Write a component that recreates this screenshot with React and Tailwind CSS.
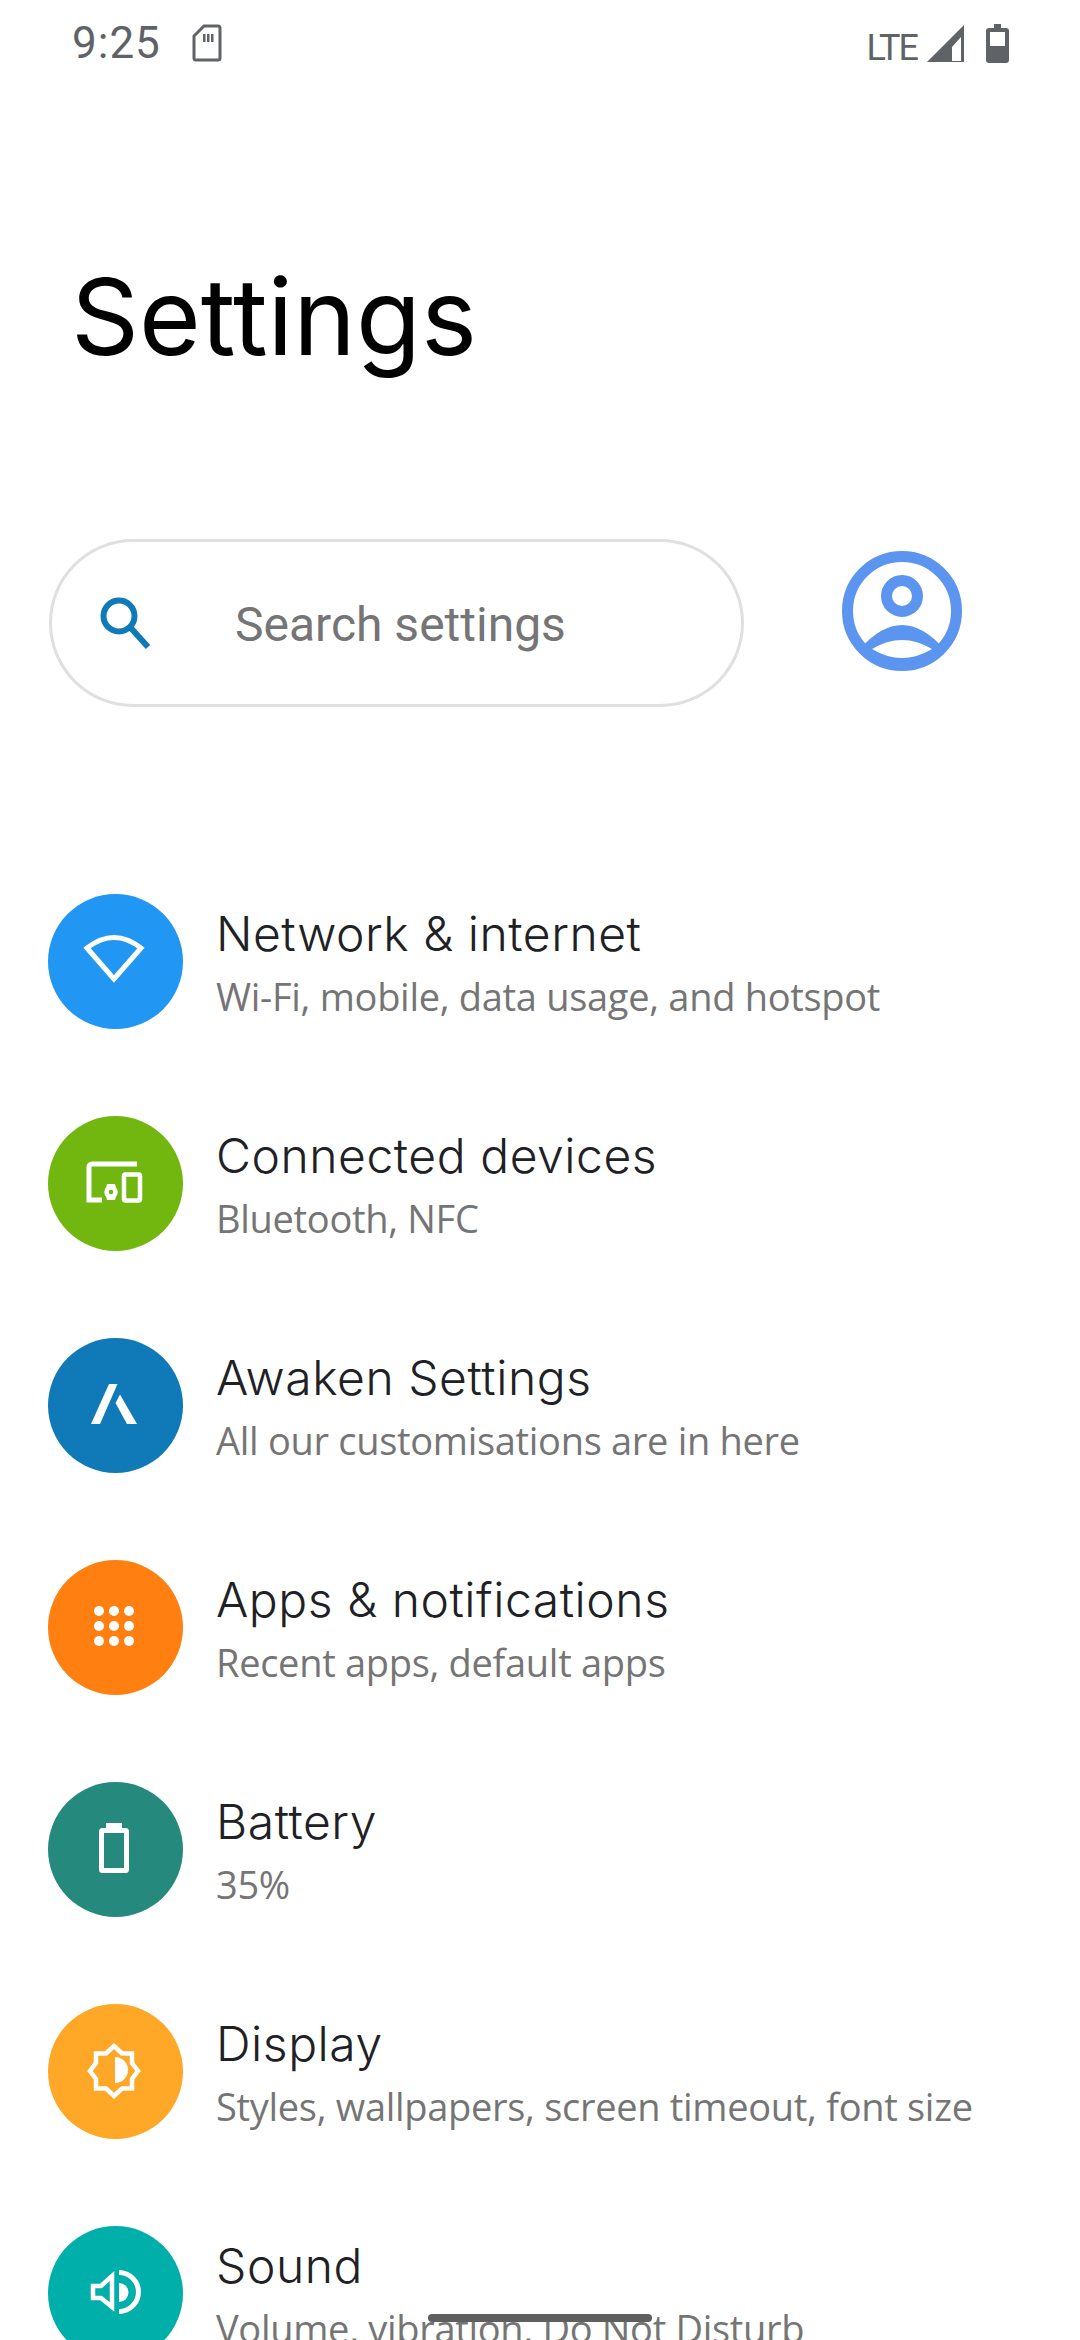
import React from "react";

const rows = [
  { title: "Network & internet", sub: "Wi-Fi, mobile, data usage, and hotspot", color: "bg-[#2196f3]", icon: "wifi" },
  { title: "Connected devices", sub: "Bluetooth, NFC", color: "bg-[#72b70f]", icon: "devices" },
  { title: "Awaken Settings", sub: "All our customisations are in here", color: "bg-[#1079b7]", icon: "awaken" },
  { title: "Apps & notifications", sub: "Recent apps, default apps", color: "bg-[#ff7f11]", icon: "apps" },
  { title: "Battery", sub: "35%", color: "bg-[#26897e]", icon: "battery" },
  { title: "Display", sub: "Styles, wallpapers, screen timeout, font size", color: "bg-[#ffa726]", icon: "display" },
  { title: "Sound", sub: "Volume, vibration, Do Not Disturb", color: "bg-[#00afaa]", icon: "sound" },
];

const RowIcon = ({ name }) => {
  // all drawn in the circle's own 135 box
  return (
    <svg viewBox="0 0 135 135" className="w-[135px] h-[135px]" fill="none" stroke="#fff" strokeWidth="5">
      {name === "wifi" && <path d="M66 85L39 54Q66 33 93 54Z" />}
      {name === "devices" && (
        <g>
          <path d="M89 48H44a3 3 0 0 0-3 3V84H54" />
          <rect x="76" y="58.500" width="16" height="26" rx="1.500" strokeWidth="4.500" />
          <circle cx="63" cy="76" r="4.500" strokeWidth="4.500" />
          <path d="M59 68h8l1 4h-10zM59 84h8l1-4h-10z" fill="#fff" stroke="none" />
        </g>
      )}
      {name === "awaken" && (
        <path d="M61 46H69.500L52 86H43ZM72 56.500L89 86H79L67.500 65Z" fill="#fff" stroke="none" />
      )}
      {name === "apps" && (
        <g fill="#fff" stroke="none">
          {[51, 66, 81].map((y) =>
            [51, 66, 81].map((x) => <circle key={`${x}-${y}`} cx={x} cy={y} r="5" />)
          )}
        </g>
      )}
      {name === "battery" && (
        <g>
          <rect x="53.500" y="48.500" width="25" height="40" rx="1" />
          <rect x="58" y="41" width="16" height="7" fill="#fff" stroke="none" />
        </g>
      )}
      {name === "display" && (
        <g>
          <path d="M66 42L74 49.500H84V59L90 67L84 75V84.500H74L66 92L58 84.500H48V75L42 67L48 59V49.500H58Z" strokeWidth="4.500" />
          <path d="M67 53a13 13 0 0 1 0 26Z" fill="#fff" stroke="none" />
        </g>
      )}
      {name === "sound" && (
        <g>
          <path d="M45 60H53L64 50V81L53 72H45Z" strokeWidth="4.500" />
          <path d="M71 44A22 22 0 0 1 71 88V83A17 17 0 0 0 71 49Z" fill="#fff" stroke="none" />
          <path d="M71 57A9.500 9.500 0 0 1 71 76Z" fill="#fff" stroke="none" />
        </g>
      )}
    </svg>
  );
};

const Row = ({ row }) => (
  <div className="flex items-center h-[135px] pl-[48px]">
    <div className={`w-[135px] h-[135px] rounded-full shrink-0 ${row.color}`}>
      <RowIcon name={row.icon} />
    </div>
    <div className="ml-[33px] flex flex-col">
      <div className="font-['Inter',sans-serif] font-light text-[48px] leading-[64px] tracking-[0.55px] text-[#202124] whitespace-nowrap">{row.title}</div>
      <div className="mt-[5px] font-['Open_Sans',sans-serif] text-[38px] leading-[50px] tracking-[-0.3px] text-[#757575] whitespace-nowrap">{row.sub}</div>
    </div>
  </div>
);

export default function App() {
  return (
    <div className="relative h-[2340px] w-[1080px] overflow-hidden bg-white">
      <div className="flex items-center h-[86px] pl-[72px] pr-[71px] text-[#5f6368]">
        <span className="font-['Roboto',sans-serif] text-[44px] tracking-[1px] leading-none">9:25</span>
        <svg viewBox="0 0 30 38" className="ml-[31px] w-[30px] h-[38px]" fill="none">
          <path d="M12 2H26a2 2 0 0 1 2 2V34a2 2 0 0 1-2 2H4a2 2 0 0 1-2-2V12Z" stroke="#5f6368" strokeWidth="3" />
          <path d="M11 10h2.500v8H11zM15 10h2.500v8H15zM19 10h2.500v8H19z" fill="#5f6368" />
        </svg>
        <span className="ml-auto font-['Roboto',sans-serif] text-[36px] tracking-[-2px] leading-none mt-[10px]">LTE</span>
        <svg viewBox="0 0 37 37" className="ml-[10px] w-[37px] h-[37px]">
          <path d="M37 0V37H0ZM25 36H34V12L25 22Z" fill="#5f6368" fillRule="evenodd" />
        </svg>
        <svg viewBox="0 0 23 39" className="ml-[22px] w-[23px] h-[39px]">
          <path d="M8 0H15V4H20a3 3 0 0 1 3 3V36a3 3 0 0 1-3 3H3a3 3 0 0 1-3-3V7a3 3 0 0 1 3-3H8ZM4 8V22H19V8Z" fill="#5f6368" fillRule="evenodd" />
        </svg>
      </div>

      <h1 className="mt-[158px] ml-[71px] font-['Inter',sans-serif] text-[106px] leading-[146px] text-black">Settings</h1>

      <div className="mt-[149px] flex items-start pl-[49px]">
        <div className="flex items-center w-[695px] h-[168px] rounded-full border-[3px] border-[#e0e0e0]">
          <svg viewBox="0 0 50 52" className="ml-[48px] w-[50px] h-[52px]" fill="none" stroke="#1079b7" strokeWidth="6">
            <circle cx="19" cy="19" r="15.500" />
            <path d="M30 30L48 50" />
          </svg>
          <span className="ml-[85px] mt-[3px] font-['Roboto',sans-serif] text-[48px] text-[#757575]">Search settings</span>
        </div>
        <svg viewBox="0 0 120 120" className="ml-[98px] mt-[12px] w-[120px] h-[120px]" fill="none" stroke="#5c95f0" strokeWidth="11">
          <circle cx="60" cy="60" r="54.500" />
          <circle cx="60" cy="45" r="15.500" />
          <path d="M18 98Q60 50 102 98Q60 125 18 98ZM30 98Q60 80 90 98Q60 116 30 98Z" fill="#5c95f0" fillRule="evenodd" stroke="none" />
        </svg>
      </div>

      <div className="mt-[187px] flex flex-col gap-[87px]">
        {rows.map((row) => (
          <Row key={row.title} row={row} />
        ))}
      </div>

      <div className="absolute left-[428px] top-[2314px] w-[224px] h-[8px] rounded-full bg-[#5f5f5f]" />
    </div>
  );
}
